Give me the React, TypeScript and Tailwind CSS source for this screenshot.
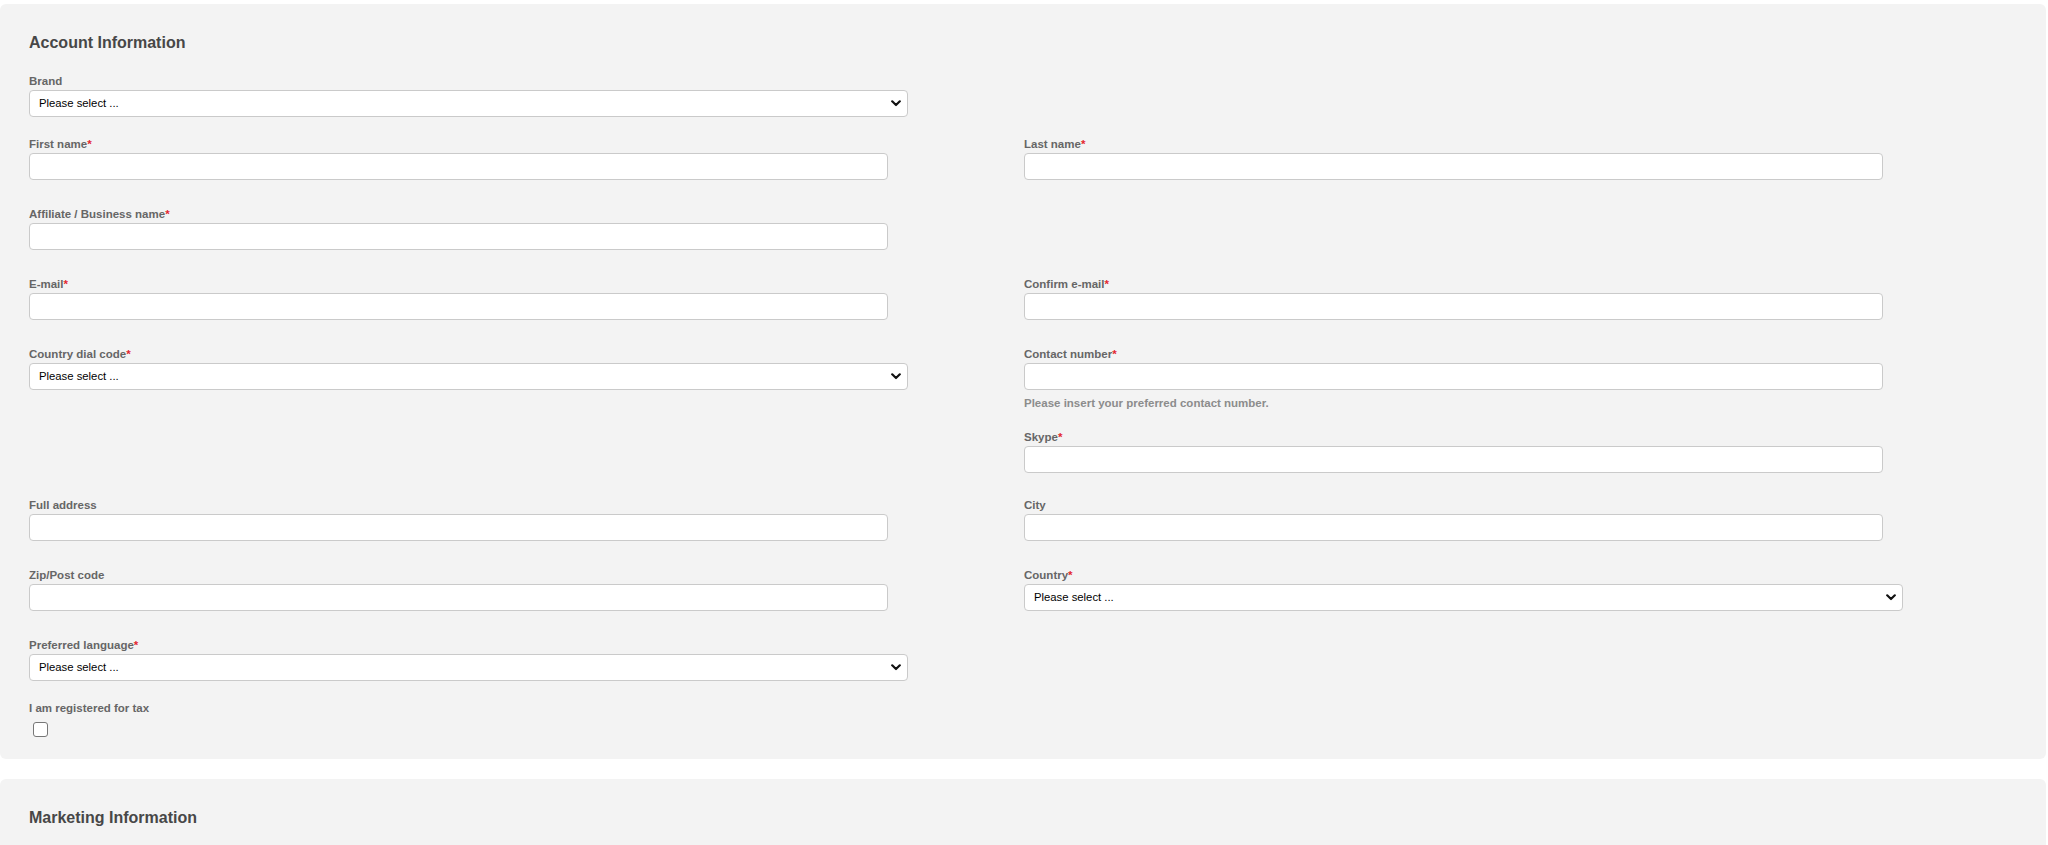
import React from "react";

const FONT = { fontFamily: '"Liberation Sans", Arial, Helvetica, sans-serif' };

function Label({ text, required }: { text: string; required?: boolean }) {
  return (
    <div className="text-[11.5px] leading-[14px] font-bold text-[#666666] mb-[2px]">
      {text}
      {required && <span className="text-[#e3262f]">*</span>}
    </div>
  );
}

function TextField({ label, required }: { label: string; required?: boolean }) {
  return (
    <div>
      <Label text={label} required={required} />
      <input
        type="text"
        className="block w-[859px] h-[27px] bg-white border border-[#cacaca] rounded-[4px] px-[9px] text-[11.3px] text-black outline-none"
      />
    </div>
  );
}

function SelectField({ label, required }: { label: string; required?: boolean }) {
  return (
    <div>
      <Label text={label} required={required} />
      <div className="relative w-[879px] h-[27px]">
        <select className="appearance-none block w-full h-full bg-white border border-[#cacaca] rounded-[4px] pl-[9px] pr-8 text-[11.3px] text-black outline-none">
          <option>Please select ...</option>
        </select>
        {/* chevron */}
        <svg
          className="absolute right-[7px] top-[10px] pointer-events-none"
          width="10"
          height="7"
          viewBox="0 0 10 7"
          fill="none"
        >
          <path d="M1.2 1.3 L5 5 L8.8 1.3" stroke="#111" strokeWidth="2.2" strokeLinecap="round" strokeLinejoin="round" />
        </svg>
      </div>
    </div>
  );
}

export default function App() {
  return (
    <div className="h-[845px] bg-white overflow-hidden" style={FONT}>
      {/* Account Information */}
      <section className="mt-[4px] mr-[2px] bg-[#f3f3f3] rounded-[6px] pt-[29px] pb-[22px] pl-[29px]">
        <h2 className="text-[16px] leading-[20px] font-bold text-[#474747] mb-[21px]">Account Information</h2>

        <div className="grid grid-cols-[995px_1fr]">
          <div className="pb-[20px]">
            <SelectField label="Brand" />
          </div>
          <div />

          <div className="pb-[27px]">
            <TextField label="First name" required />
          </div>
          <div className="pb-[27px]">
            <TextField label="Last name" required />
          </div>

          <div className="pb-[27px]">
            <TextField label="Affiliate / Business name" required />
          </div>
          <div />

          <div className="pb-[27px]">
            <TextField label="E-mail" required />
          </div>
          <div className="pb-[27px]">
            <TextField label="Confirm e-mail" required />
          </div>

          <div className="pb-[20px]">
            <SelectField label="Country dial code" required />
          </div>
          <div className="pb-[20px]">
            <TextField label="Contact number" required />
            <div className="mt-[6px] text-[11.5px] leading-[14px] font-bold text-[#8c8c8c]">
              Please insert your preferred contact number.
            </div>
          </div>

          <div />
          <div className="pb-[25px]">
            <TextField label="Skype" required />
          </div>

          <div className="pb-[27px]">
            <TextField label="Full address" />
          </div>
          <div className="pb-[27px]">
            <TextField label="City" />
          </div>

          <div className="pb-[27px]">
            <TextField label="Zip/Post code" />
          </div>
          <div className="pb-[27px]">
            <SelectField label="Country" required />
          </div>

          <div className="pb-[20px]">
            <SelectField label="Preferred language" required />
          </div>
          <div />

          <div>
            <Label text="I am registered for tax" />
            <div className="mt-[7px] ml-[4px] w-[15px] h-[15px] bg-white border border-[#777] rounded-[3px]" />
          </div>
          <div />
        </div>
      </section>

      {/* Marketing Information */}
      <section className="mt-[20px] mr-[2px] bg-[#f3f3f3] rounded-[6px] pt-[29px] pl-[29px] h-[200px]">
        <h2 className="text-[16px] leading-[20px] font-bold text-[#474747]">Marketing Information</h2>
      </section>
    </div>
  );
}
